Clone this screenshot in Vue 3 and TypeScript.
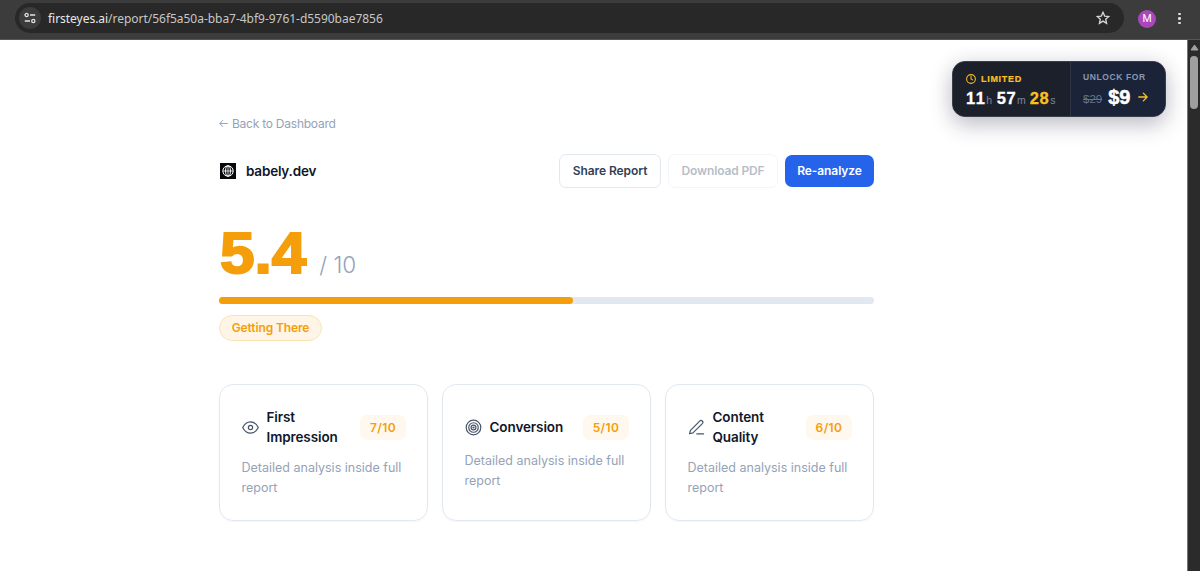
<script setup lang="ts">
interface Category {
  id: 'eye' | 'target' | 'pen'
  lines: string[]
  score: number
}

const score = 5.4
const categories: Category[] = [
  { id: 'eye', lines: ['First', 'Impression'], score: 7 },
  { id: 'target', lines: ['Conversion'], score: 5 },
  { id: 'pen', lines: ['Content', 'Quality'], score: 6 },
]
</script>

<template>
  <div class="window">
    <header class="toolbar">
      <div class="address">
        <span class="site-info">
          <svg width="12" height="12" viewBox="0 0 12 12" fill="none" stroke="#e3e3e3" stroke-width="1.3">
            <circle cx="2.6" cy="3" r="1.6" /><path d="M6 3h5.2M.8 9h5.2" /><circle cx="9.3" cy="9" r="1.6" />
          </svg>
        </span>
        <span class="url"><span class="host">firsteyes.ai</span>/report/56f5a50a-bba7-4bf9-9761-d5590bae7856</span>
        <svg class="star" width="14" height="14" viewBox="0 0 14 14" fill="none" stroke="#d6d6d6" stroke-width="1.3" stroke-linejoin="miter">
          <path d="M7 1.3 8.7 5.1l4.1.4-3.1 2.7.9 4.1L7 10.1l-3.6 2.2.9-4.1L1.2 5.5l4.1-.4z" />
        </svg>
      </div>
      <span class="avatar">M</span>
      <span class="kebab"><i></i><i></i><i></i></span>
    </header>

    <div class="viewport">
      <main class="page">
        <div class="content">
          <a class="back">
            <svg width="9" height="9" viewBox="0 0 9 9" fill="none" stroke="currentColor" stroke-width="1"><path d="M8.7 4.5H.8M4 1.2.8 4.5 4 7.8" /></svg>
            <span>Back to Dashboard</span>
          </a>

          <div class="title-row">
            <svg width="16" height="16" viewBox="0 0 16 16">
              <rect width="16" height="16" fill="#05070a" />
              <g fill="none" stroke="#fff" stroke-width="1"><circle cx="8" cy="8" r="5.2" /><ellipse cx="8" cy="8" rx="2.4" ry="5.2" /><path d="M3 8h10M8 2.8v10.4" stroke-width=".8" /></g>
            </svg>
            <h1>babely.dev</h1>
            <button class="share">Share Report</button>
            <button class="download" disabled>Download PDF</button>
            <button class="primary">Re-analyze</button>
          </div>

          <div class="score"><strong>{{ score }}</strong><span>/ 10</span></div>
          <div class="track"><div class="fill" :style="{ width: `${score * 10}%` }"></div></div>
          <span class="status">Getting There</span>

          <section class="cards">
            <article v-for="c in categories" :key="c.id" class="card">
              <div class="card-head">
                <svg width="17" height="17" viewBox="0 0 24 24" fill="none" stroke="#475569" stroke-width="1.7" stroke-linecap="round" stroke-linejoin="round">
                  <template v-if="c.id === 'eye'">
                    <path d="M1 12s4-8 11-8 11 8 11 8-4 8-11 8S1 12 1 12z" /><circle cx="12" cy="12" r="3" />
                  </template>
                  <template v-else-if="c.id === 'target'">
                    <circle cx="12" cy="12" r="10.3" /><circle cx="12" cy="12" r="6.7" /><circle cx="12" cy="12" r="3.4" /><circle cx="12" cy="12" r=".7" />
                  </template>
                  <template v-else>
                    <path d="M12.5 21H22" /><path d="M16.5 3a2.5 2.5 0 0 1 3.7 3.5L7 19.5l-4.8 1.3L3.500 16z" />
                  </template>
                </svg>
                <h2><span v-for="l in c.lines" :key="l">{{ l }}</span></h2>
                <span class="badge">{{ c.score }}/10</span>
              </div>
              <p>Detailed analysis inside full report</p>
            </article>
          </section>
        </div>
      </main>

      <aside class="scrollbar">
        <svg width="9" height="7" viewBox="0 0 9 7"><path d="M4.5 1 8 6H1z" fill="#a0a0a0" stroke="#a0a0a0" stroke-linejoin="round" /></svg>
        <div class="thumb"></div>
      </aside>
    </div>

    <div class="offer">
      <div class="timer">
        <div class="limited">
          <svg width="10" height="10" viewBox="0 0 24 24" fill="none" stroke="currentColor" stroke-width="2.5" stroke-linecap="round"><circle cx="12" cy="12" r="10.5" /><path d="M12 5.5V12l4 2.2" /></svg>
          <span>LIMITED</span>
        </div>
        <div class="clock"><b>11</b><i class="h">h</i><b>57</b><i>m</i><b class="seconds">28</b><i>s</i></div>
      </div>
      <div class="unlock">
        <div class="unlock-label">UNLOCK FOR</div>
        <div class="price">
          <s>$29</s><b>$9</b>
          <svg width="10" height="10" viewBox="0 0 9 9" fill="none" stroke="#fbbf24" stroke-width="1.2" stroke-linecap="round" stroke-linejoin="round"><path d="M.7 4.5h7.4M4.8 1l3.4 3.5L4.8 8" /></svg>
        </div>
      </div>
    </div>
  </div>
</template>

<style>
body { margin: 0; overflow: hidden; background: #fff; }
</style>

<style scoped>
* { box-sizing: border-box; }
.window { position: relative; width: 1200px; height: 571px; overflow: hidden; font-family: Inter, "Liberation Sans", sans-serif; display: flex; flex-direction: column; }
.toolbar { height: 40px; flex: none; background: #3c3c3c; display: flex; align-items: center; padding: 0 0 3px 15px; border-bottom: 1px solid #555; }
.address { width: 1109px; height: 30px; border-radius: 15px; background: #282828; display: flex; align-items: center; padding: 0 14px 0 4px; }
.site-info { width: 22px; height: 22px; border-radius: 50%; background: #3c3c3c; display: grid; place-items: center; }
.url { margin: 2px 0 0 7px; font: 12px/20px "Noto Sans", sans-serif; color: #c7c7c7; letter-spacing: -0.03px; white-space: nowrap; }
.host { color: #e8e8e8; }
.star { margin-left: auto; }
.avatar { margin: 1px 0 0 14px; width: 18px; height: 18px; border-radius: 50%; background: #ab47bc; color: #fff; font: 10.5px/18px Roboto, sans-serif; text-align: center; }
.kebab { margin: 1px 0 0 22px; display: flex; flex-direction: column; gap: 2px; }
.kebab i { width: 2.5px; height: 2.5px; border-radius: 50%; background: #e0e0e0; }
.viewport { flex: 1; display: flex; min-height: 0; }
.page { flex: 1; background: #fff; padding: 75px 0 0 219px; }
.scrollbar { width: 13px; background: #2b2b2b; border-left: 1px solid #777; display: flex; flex-direction: column; align-items: center; padding-top: 4px; }
.thumb { margin-top: 5px; width: 8px; height: 53px; border-radius: 4px; background: #9f9f9f; }
.content { width: 655px; }
.back { display: flex; align-items: center; gap: 4px; height: 16px; font-size: 12px; color: #94a3b8; letter-spacing: -0.24px; }
.title-row { margin-top: 23px; height: 34px; display: flex; align-items: center; padding-left: 1px; }
h1 { margin: 0 auto 0 10px; font-size: 13.5px; font-weight: 600; color: #0f172a; letter-spacing: -.2px; }
button { font-family: inherit; font-size: 12px; font-weight: 600; padding: 0 0 1px; border-radius: 7px; white-space: nowrap; letter-spacing: -.07px; }
.share { width: 102px; height: 34px; border: 1px solid #e2e8f0; background: #fff; color: #334155; }
.download { width: 110px; height: 34px; margin-left: 7px; border: 1px solid #f3f5f8; background: #fff; color: #b8bec8; letter-spacing: -.15px; }
.primary { width: 89px; height: 32px; margin-left: 7px; border: 0; background: #2563eb; color: #fff; }
.score { height: 62px; margin-top: 34px; display: flex; align-items: baseline; line-height: 62px; padding-left: 1px; }
.score strong { font-family: "Liberation Sans", Arial, sans-serif; font-size: 57px; font-weight: 700; color: #f59e0b; -webkit-text-stroke: 2px #f59e0b; transform: scaleX(1.09); transform-origin: left; }
.score span { margin-left: 20px; font-size: 22.5px; font-weight: 300; color: #94a3b8; }
.track { margin-top: 13px; height: 7px; border-radius: 4px; background: #e2e8f0; }
.fill { height: 100%; border-radius: 4px; background: #f59e0b; }
.status { margin-top: 11px; display: flex; align-items: center; justify-content: center; width: 103px; height: 26px; border: 1px solid #fbe3b5; border-radius: 13px; background: #fef5e7; color: #f59e0b; font-size: 12px; line-height: 14px; padding-bottom: 1px; font-weight: 600; letter-spacing: -.12px; }
.cards { margin-top: 43px; display: grid; grid-template-columns: repeat(3, 1fr); gap: 14px; }
.card { height: 137px; border: 1px solid #e2e8f0; border-radius: 14px; padding: 1px 21px 0 21.500px; display: flex; flex-direction: column; justify-content: center; gap: 11px; box-shadow: 0 1px 2px rgba(15, 23, 42, .04); }
.card-head { display: flex; align-items: center; min-height: 25px; margin-top: -1px; }
h2 { margin: 0 auto 0 8px; font-size: 13.5px; line-height: 20px; font-weight: 600; color: #0f172a; letter-spacing: -.1px; }
h2 span { display: block; }
.badge { width: 46px; height: 25px; border-radius: 7px; background: #fef8ee; color: #f59e0b; font-size: 12px; line-height: 25px; font-weight: 600; text-align: center; letter-spacing: .4px; }
p { margin: 0; font-size: 12.5px; line-height: 20px; color: #94a3b8; }
.offer { position: absolute; left: 952px; top: 61px; width: 214px; height: 56px; display: flex; border: 1px solid #3a3f4a; border-radius: 13px; overflow: visible; background: #1c202b; box-shadow: 0 8px 22px rgba(30, 27, 60, .26), 0 0 22px rgba(30, 27, 60, .06); font-family: "Liberation Sans", Arial, sans-serif; }
.timer { width: 118px; padding: 11px 0 0 13px; border-right: 1px solid #2e3544; border-radius: 12px 0 0 12px; background: #1c202b; }
.limited { display: flex; align-items: center; gap: 5px; height: 11px; color: #fbbf24; font-size: 9px; font-weight: 700; letter-spacing: .7px; -webkit-text-stroke: .2px currentColor; }
.clock { display: flex; align-items: baseline; height: 20px; margin-top: 4px; line-height: 20px; white-space: nowrap; }
.clock b { font-size: 16.5px; font-weight: 700; color: #fff; letter-spacing: .5px; -webkit-text-stroke: .3px currentColor; font-kerning: none; }
.clock i { font-style: normal; font-size: 10.5px; color: #7c879a; margin: 0 4px 0 1px; }
.clock .h { margin-right: 4.5px; }
.clock .seconds { color: #fbbf24; }
.unlock { flex: 1; padding: 10px 0 0 12px; border-radius: 0 12px 12px 0; background: #1a2338; }
.unlock-label { height: 11px; line-height: 11px; font-size: 8.5px; font-weight: 600; letter-spacing: .6px; color: #8b98ad; white-space: nowrap; }
.price { margin-top: 3px; height: 22px; display: flex; align-items: center; line-height: 22px; }
.price s { font-size: 11.5px; color: #64748b; padding-top: 3px; }
.price b { margin: 0 8px 0 6px; font-size: 20px; font-weight: 700; color: #fff; -webkit-text-stroke: .5px #fff; }
</style>
